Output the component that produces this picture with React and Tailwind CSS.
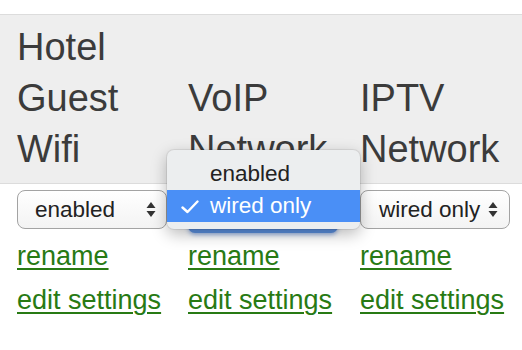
import React from "react";

function Arrows() {
  return (
    <svg width="10" height="17" viewBox="0 0 10 17" className="shrink-0">
      <path d="M5 1 L9.5 7 L0.5 7 Z" fill="#333" />
      <path d="M5 16 L9.5 10 L0.5 10 Z" fill="#333" />
    </svg>
  );
}

function Select({ label, pl = "pl-[17px]", pr = "pr-[10px]" }) {
  return (
    <div
      className={`w-[150px] h-[39px] rounded-[8px] border border-[#a3a3a3] bg-gradient-to-b from-white to-[#f3f3f3] flex items-center justify-between ${pl} ${pr} text-[22.5px] text-[#222]`}
    >
      <span>{label}</span>
      <Arrows />
    </div>
  );
}

function Links() {
  return (
    <div className="mt-[5px] text-[27px] leading-[44px] text-[#287a14]">
      <div>
        <a className="underline decoration-2 underline-offset-[3px]">rename</a>
      </div>
      <div>
        <a className="underline decoration-2 underline-offset-[3px]">edit settings</a>
      </div>
    </div>
  );
}

export default function App() {
  return (
    <div
      className="w-[522px] h-[350px] bg-white overflow-hidden relative"
      style={{ fontFamily: '"Liberation Sans", Arial, sans-serif' }}
    >
      <div className="h-[14px]" />
      <div className="border-t border-b border-[#dcdcdc] bg-[#eeeeee]">
        <div className="grid grid-cols-[171px_172px_172px] pl-[17px] pt-[7px] pb-[8px] text-[38px] leading-[51px] text-[#3b3b3b]">
          <div className="flex flex-col justify-end">
            <span>Hotel</span>
            <span>Guest</span>
            <span>Wifi</span>
          </div>
          <div className="flex flex-col justify-end">
            <span>VoIP</span>
            <span>Network</span>
          </div>
          <div className="flex flex-col justify-end">
            <span>IPTV</span>
            <span>Network</span>
          </div>
        </div>
      </div>
      <div className="grid grid-cols-[171px_172px_172px] pl-[17px] pt-[6px]">
        <div>
          <Select label="enabled" />
          <Links />
        </div>
        <div className="relative">
          <div className="h-[39px]">
            <div className="w-[150px] h-[43px] rounded-[7px] bg-[#5a8fde] shadow-[0_2px_4px_rgba(60,110,200,0.5)]" />
          </div>
          <Links />
          <div className="absolute left-[-21px] top-[-40px] w-[193px] h-[79px] rounded-[7px] bg-[#eceeef] shadow-[0_5px_16px_rgba(0,0,0,0.28),0_0_0_1px_rgba(0,0,0,0.07)] pt-[8px] text-[22.5px] text-[#222] z-10">
            <div className="h-[32px] flex items-center pl-[43px]">enabled</div>
            <div className="h-[32px] flex items-center pl-[43px] bg-[#4a8ff6] text-white relative">
              <svg
                width="18"
                height="14"
                viewBox="0 0 18 14"
                className="absolute left-[14px] top-[10px]"
              >
                <path
                  d="M1.5 7.5 L6.5 12 L16.5 1.5"
                  fill="none"
                  stroke="white"
                  strokeWidth="2.4"
                  strokeLinecap="round"
                  strokeLinejoin="round"
                />
              </svg>
              wired only
            </div>
          </div>
        </div>
        <div>
          <Select label="wired only" pl="pl-[18px]" pr="pr-[11px]" />
          <Links />
        </div>
      </div>
    </div>
  );
}
